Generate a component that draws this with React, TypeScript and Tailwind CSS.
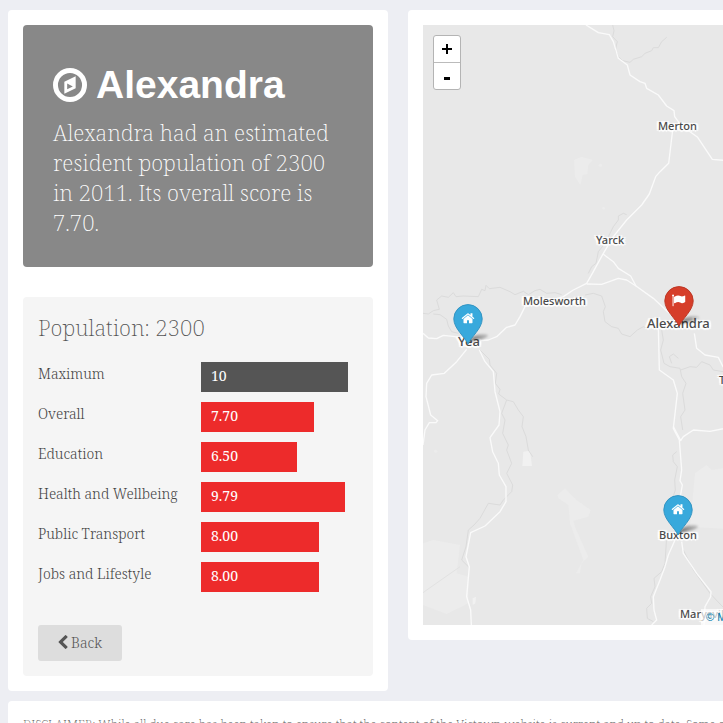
import type { ReactNode } from "react";

type Score = { label: string; text: string; value: number; tone: string };

const scores: Score[] = [
  { label: "Maximum", text: "10", value: 10, tone: "bg-[#555555]" },
  { label: "Overall", text: "7.70", value: 7.7, tone: "bg-[#ed2b2b]" },
  { label: "Education", text: "6.50", value: 6.5, tone: "bg-[#ed2b2b]" },
  { label: "Health and Wellbeing", text: "9.79", value: 9.79, tone: "bg-[#ed2b2b]" },
  { label: "Public Transport", text: "8.00", value: 8, tone: "bg-[#ed2b2b]" },
  { label: "Jobs and Lifestyle", text: "8.00", value: 8, tone: "bg-[#ed2b2b]" },
];

const roads = [
  "558,75 595,98 628,104 640,125 655,175 682,195 690,225 720,245 735,250 740,265 775,285 800,318 822,332 824,350 835,365 845,385 870,395 893,412 937,478 1010,484 1130,560 1300,600 1689,700",
  "818,390 806,490 780,515 767,530 748,582 725,615 680,660 640,710 610,760 580,815 560,850 520,870 490,890 440,905 375,920 360,950 345,975 320,982 290,1010 265,1020 200,1025",
  "610,763 640,785 655,805 692,828 708,858 760,895 800,932 830,960",
  "560,852 605,853 655,835 680,840 708,858",
  "775,980 778,1110 820,1140 832,1180 820,1285 838,1320 845,1410 840,1442 847,1455 841,1490 833,1610",
  "883,1000 890,1045 915,1065 955,1072 969,1100 1100,1180",
  "820,1280 842,1322 850,1310 880,1290 930,1294 1000,1280 1200,1300",
  "69,1000 85,1014 110,1016 130,1006 165,1010 200,1025",
  "200,1048 170,1085 133,1120 95,1125 80,1150 78,1190 92,1245 113,1262 108,1268 88,1268 75,1290 69,1335",
  "238,1050 255,1085 280,1115 285,1175 300,1235 297,1275 270,1313 278,1355 295,1390 298,1425 318,1460 318,1505 300,1535 255,1578 212,1598 198,1670 208,1700 200,1790 212,1830 214,1875",
  "825,1620 805,1665 795,1700 780,1740 760,1790 762,1830 770,1860 755,1875",
  "845,1625 850,1660 890,1720 933,1775 932,1790 915,1820 912,1875",
];

const rivers = [
  "638,75 642,92 638,110 652,125 646,150 655,170 668,182 690,187 700,178 725,170 735,160 755,152 760,143 775,143 785,125 800,112",
  "69,940 85,942 100,932 118,928 110,900 125,888 145,892 160,878 168,890 190,888 235,890 245,868 255,872 258,856 268,866 300,862 330,875 345,884 370,874 385,884 405,872 420,868 440,880 465,878 485,884",
  "555,885 580,880 605,888 616,920 610,935 615,965 635,980 655,985 665,1002 690,1010 712,990 730,980 745,985",
  "100,942 120,944 140,958 145,978 155,995 175,1000",
  "240,1050 268,1078 270,1095 290,1120 286,1150 300,1168 296,1182 320,1200 305,1240 315,1260 308,1300 325,1335 320,1350 335,1390 320,1420 338,1455 335,1475 310,1500 300,1515 265,1510 240,1555 222,1575 205,1590 198,1640 185,1680 205,1700",
  "320,1200 340,1205 355,1230 370,1250 366,1280 378,1310 385,1350 398,1370",
  "655,660 640,680 615,730 595,755 588,790 575,800 565,820",
  "785,990 790,1020 782,1050 792,1090 810,1100 840,1105 845,1130 858,1150 848,1180 855,1230 842,1250 848,1290",
  "842,1110 870,1100 890,1102 905,1085 930,1095 940,1110 969,1115 1060,1140",
  "815,1090 808,1070 820,1062 835,1075",
  "830,1355 818,1365 820,1385 832,1400 824,1440 826,1470 816,1500",
  "800,1610 795,1690 785,1715 762,1735 765,1760 752,1790 755,1810 740,1825 742,1855 760,1865",
  "850,1650 880,1710 930,1780 960,1812 1000,1850",
  "655,660 655,648 670,640 680,644",
];

const home =
  "M1408 544v-480q0 -26 -19 -45t-45 -19h-384v384h-256v-384h-384q-26 0 -45 19t-19 45v480q0 1 .5 3t.5 3l575 474l575 -474q1 -2 1 -6zM1631 613l-62 -74q-8 -9 -21 -11h-3q-13 0 -21 7l-692 577l-692 -577q-12 -8 -24 -7q-13 2 -21 11l-62 74q-8 10 -7 23.5t11 21.5l719 599q32 26 76 26t76 -26l244 -204v195q0 14 9 23t23 9h192q14 0 23 -9t9 -23v-408l219 -182q10 -8 11 -21.5t-7 -23.5z";
const flag =
  "M320 1280q0 -72 -64 -110v-1266q0 -13 -9.5 -22.5t-22.5 -9.5h-64q-13 0 -22.5 9.5t-9.5 22.5v1266q-64 38 -64 110q0 53 37.5 90.5t90.5 37.5t90.5 -37.5t37.5 -90.5zM1792 1216v-763q0 -25 -12.5 -38.5t-39.5 -27.5q-215 -116 -369 -116q-61 0 -123.5 22t-108.5 48t-115.5 48t-142.5 22q-192 0 -464 -146q-17 -9 -33 -9q-26 0 -45 19t-19 45v742q0 32 31 55q21 14 79 43q236 120 421 120q107 0 200 -29t219 -88q38 -19 88 -19q54 0 117.5 21t110 47t88 47t54.5 21q26 0 45 -19t19 -45z";

function CompassIcon() {
  return (
    <svg className="size-[34px] shrink-0" viewBox="0 0 1536 1536" fill="currentColor" aria-hidden="true">
      <circle cx="768" cy="768" r="656" fill="none" stroke="currentColor" strokeWidth="224" />
      <path fillRule="evenodd" d="M1024 369v542l-512 256v-542zM640 704v256l256 -128z" />
    </svg>
  );
}

function ChevronLeftIcon() {
  return (
    <svg className="h-[14px] w-[10px]" viewBox="90 0 1150 1536" fill="currentColor" aria-hidden="true">
      <path
        transform="matrix(1 0 0 -1 0 1472)"
        d="M1171 1235l-531 -531l531 -531q19 -19 19 -45t-19 -45l-166 -166q-19 -19 -45 -19t-45 19l-742 742q-19 19 -19 45t19 45l742 742q19 19 45 19t45 -19l166 -166q19 -19 19 -45t-19 -45z"
      />
    </svg>
  );
}

function Pin({ place, kind }: { place: string; kind: "home" | "flag" }) {
  const red = kind === "flag";
  return (
    <svg className={`absolute h-[42px] w-[38px] ${place}`} viewBox="0 0 38 42" aria-hidden="true">
      <defs>
        <linearGradient id={`fade-${kind}`} x1="0" x2="1" y1="1" y2="0">
          <stop offset="0" stopColor="#000" stopOpacity="0.65" />
          <stop offset="1" stopColor="#000" stopOpacity="0.1" />
        </linearGradient>
        <filter id={`soft-${kind}`} x="-30%" y="-60%" width="160%" height="220%">
          <feGaussianBlur stdDeviation="1.2" />
        </filter>
      </defs>
      <path
        d="M15 39C18 33 23 30 30 30C36 30 37 32 32 34C27 36 21 36 15 39Z"
        fill={`url(#fade-${kind})`}
        filter={`url(#soft-${kind})`}
      />
      <path
        d="M15 40C12 33 0.8 24.5 0.8 14.8A14.2 14.2 0 0 1 29.2 14.8C29.2 24.5 18 33 15 40Z"
        fill={red ? "#d63e2a" : "#38a9dc"}
        stroke={red ? "#bd3826" : "#3394c2"}
        strokeWidth="1"
      />
      <path
        d={red ? flag : home}
        transform={red ? "matrix(0.0076 0 0 -0.0076 7.6 19.2)" : "matrix(0.0078 0 0 -0.0078 8.5 19.2)"}
        fill="#fff"
      />
    </svg>
  );
}

function Town({ place, large, children }: { place: string; large?: boolean; children: ReactNode }) {
  return (
    <span
      className={`absolute leading-4 whitespace-nowrap text-[#4a4a4a] font-['Noto_Sans',sans-serif] [text-shadow:0_0_2px_#fff,2px_1px_1px_#fff,-2px_-1px_1px_#fff,2px_-1px_1px_#fff,-2px_1px_1px_#fff,0_2px_1px_#fff] ${
        large ? "text-[13px] font-medium" : "text-[11px] font-medium"
      } ${place}`}
    >
      {children}
    </span>
  );
}

function TownMap() {
  return (
    <div className="relative h-[600px] overflow-hidden bg-[#e8e8e8]">
      <svg className="absolute top-0 left-0 h-[600px] w-[540px]" viewBox="69 75 1620 1800" aria-hidden="true">
        <g fill="#ececec">
          <path d="M522 480L545 470L578 480L565 495L562 522L548 525L541 555L525 530Z" />
          <path d="M367 1398L370 1355L390 1352L396 1398Z" fill="#f1f1f1" />
          <path d="M472 1485L495 1465L530 1500L572 1530L565 1550L520 1562L525 1580L565 1670L545 1690L540 1720L528 1720L550 1680L510 1570L505 1515L475 1495Z" />
          <path d="M69 1630L100 1620L180 1635L170 1720L205 1730L205 1810L140 1842L69 1815Z" />
          <path d="M885 1420L920 1395L935 1410L1000 1400L1200 1450L1200 1600L870 1580Z" />
          <path d="M218 1795L228 1790L226 1810L218 1815Z" fill="#f1f1f1" />
          <circle cx="601" cy="496" r="5" />
          <circle cx="611" cy="625" r="4" />
          <circle cx="107" cy="1354" r="5" />
        </g>
        <path d="M69 1778L180 1700" stroke="#e2e2e2" strokeWidth="3" />
        <g fill="none" stroke="#dbdbdb" strokeWidth="3" strokeLinejoin="round">
          {rivers.map((points) => (
            <polyline key={points} points={points} />
          ))}
        </g>
        <g fill="none" stroke="#fafafa" strokeWidth="4" strokeLinejoin="round">
          {roads.map((points) => (
            <polyline key={points} points={points} />
          ))}
        </g>
      </svg>

      <Town place="top-[93px] left-[235px]">Merton</Town>
      <Town place="top-[207px] left-[173px]">Yarck</Town>
      <Town place="top-[268px] left-[100px]">Molesworth</Town>
      <Town large place="top-[290px] left-[224px]">Alexandra</Town>
      <Town large place="top-[308px] left-[35px]">Yea</Town>
      <Town place="top-[347px] left-[296px]">Taggerty</Town>
      <Town place="top-[502px] left-[236px]">Buxton</Town>
      <Town place="top-[581px] left-[257px]">Marysville</Town>

      <Pin kind="home" place="top-[279px] left-[30px]" />
      <Pin kind="flag" place="top-[261px] left-[241px]" />
      <Pin kind="home" place="top-[470px] left-[240px]" />

      <div className="absolute top-[10px] left-[10px] flex w-7 flex-col overflow-hidden rounded-[3px] border border-[#b4b4b4] bg-white">
        <button type="button" aria-label="Zoom in" className="flex h-[27px] items-center justify-center border-b border-[#bbbbbb]">
          <svg className="size-[10px]" viewBox="0 0 10 10" aria-hidden="true">
            <path d="M4 0h2v4h4v2h-4v4h-2v-4h-4v-2h4z" />
          </svg>
        </button>
        <button type="button" aria-label="Zoom out" className="flex h-[26px] items-center justify-center pt-1">
          <span className="block h-[3px] w-[6px] bg-black" />
        </button>
      </div>

      <div className="absolute right-0 bottom-0 flex h-4 w-[262px] items-center gap-2 bg-white/70 pl-[5px] text-[11px] whitespace-nowrap text-[#0078a8] font-['Liberation_Sans',Arial,sans-serif]">
        <a href="#mapbox">© Mapbox</a>
        <a href="#osm">© OpenStreetMap</a>
        <a href="#improve">Improve this map</a>
      </div>
    </div>
  );
}

export default function App() {
  return (
    <div className="min-h-screen overflow-x-clip bg-[#edeef3] font-['Roboto_Slab','Noto_Serif',serif] font-light">
      <div className="flex min-w-[986px] flex-col gap-[10px] px-2 py-[10px]">
        <main className="flex items-start gap-5">
          <section className="flex w-[380px] shrink-0 flex-col gap-[30px] rounded-[4px] bg-white p-[15px]">
            <header className="rounded-[4px] bg-[#888888] p-[30px] text-white">
              <h1 className="flex items-center gap-[9px] pb-[2px] text-[39px] leading-[60px] font-bold font-['Liberation_Sans',Arial,sans-serif]">
                <CompassIcon />
                Alexandra
              </h1>
              <p className="text-[22px] leading-[30px] font-extralight">
                Alexandra had an estimated resident population of 2300 in 2011. Its overall score is 7.70.
              </p>
            </header>

            <div className="rounded-[4px] bg-[#f5f5f5] p-[15px]">
              <h2 className="mb-5 text-[22px] leading-[30px] font-extralight text-[#555555]">Population: 2300</h2>
              <dl className="mb-[33px] flex flex-col gap-[10px]">
                {scores.map((score) => (
                  <div key={score.label} className="flex h-[30px] pr-[10px]">
                    <dt className="w-[163px] shrink-0 text-[14px] leading-6 text-[#444444]">{score.label}</dt>
                    <dd className="flex-1 text-[14px] leading-[28px] font-normal text-white">
                      <div className={`pb-[2px] pl-[10px] ${score.tone}`} style={{ width: `${score.value * 10}%` }}>
                        {score.text}
                      </div>
                    </dd>
                  </div>
                ))}
              </dl>
              <button
                type="button"
                className="flex h-9 w-[84px] items-center justify-center gap-[3px] rounded-[3px] bg-[#dddddd] pb-[2px] text-[14px] text-[#555555]"
              >
                <ChevronLeftIcon />
                Back
              </button>
            </div>
          </section>

          <section className="min-w-0 flex-1 rounded-[4px] bg-white p-[15px]">
            <TownMap />
          </section>
        </main>

        <footer className="rounded-[4px] bg-white p-[15px]">
          <p className="text-[12px] leading-[18px] font-extralight text-[#555555]">
            DISCLAIMER: While all due care has been taken to ensure that the content of the Victown website is current
            and up to date. Some of the information may change over time.
          </p>
        </footer>
      </div>
    </div>
  );
}
